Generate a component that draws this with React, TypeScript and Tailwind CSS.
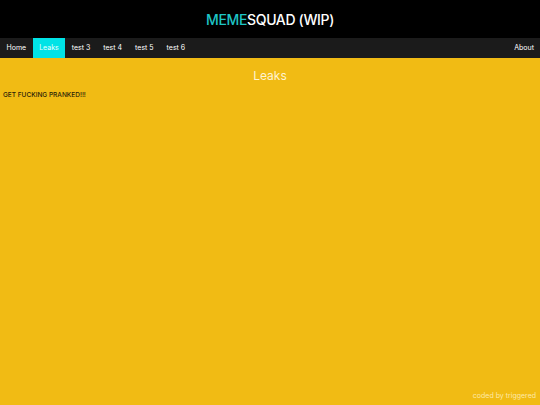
export default function App() {
  const links = ["Home", "Leaks", "test 3", "test 4", "test 5", "test 6"];
  return (
    <div
      className="flex h-[405px] w-[540px] flex-col bg-[#f1bb14]"
      style={{ fontFamily: "Inter, 'Noto Sans', sans-serif" }}
    >
      <header className="flex h-[38px] items-center justify-center bg-black">
        <h1 className="text-[14px] font-medium tracking-tight text-white">
          <span className="text-[#1ec6c6]">MEME</span>SQUAD (WIP)
        </h1>
      </header>
      <nav className="flex h-[20px] items-stretch bg-[#1b1b1b] text-[7px] text-white">
        {links.map((l) => (
          <a
            key={l}
            className={
              "flex items-center px-[6.5px] " +
              (l === "Leaks" ? "bg-[#00e3e6] text-[#e8ffff]" : "")
            }
          >
            {l}
          </a>
        ))}
        <a className="ml-auto flex items-center px-[6px]">About</a>
      </nav>
      <main className="flex flex-1 flex-col">
        <h2 className="mt-[9px] text-center text-[12px] text-[#fff4d0]">Leaks</h2>
        <p className="mt-[6px] px-[3px] text-[6.5px] font-medium text-[#2a2208]">
          GET FUCKING PRANKED!!!
        </p>
        <footer className="mt-auto mb-[4px] px-[4px] text-right text-[7px] text-[#fde9a8]">
          coded by triggered
        </footer>
      </main>
    </div>
  );
}
